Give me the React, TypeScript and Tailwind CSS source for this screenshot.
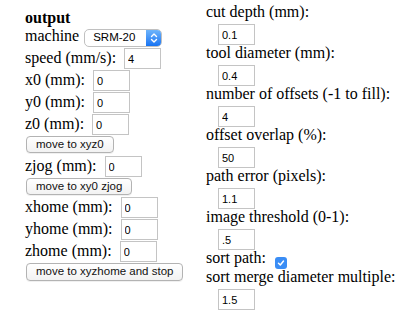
import React from 'react';

const inp =
  "w-[37px] h-[21px] box-border border border-[#c4c4c4] bg-white pl-[3px] text-[11px] text-black font-['Liberation_Sans',Arial,sans-serif] outline-none";

const btn =
  "ml-[1px] inline-flex items-center px-[9px] border border-[#b3b3b3] rounded-[4px] bg-linear-to-b from-white to-[#f2f2f2] text-[11.5px] leading-none text-[#111] font-['Liberation_Sans',Arial,sans-serif] shadow-[0_1px_0_rgba(0,0,0,0.06)]";

function Row({ label, value }: { label: string; value: string }) {
  return (
    <div className="flex items-baseline mb-[1px]">
      <span className="leading-[16px]">{label}</span>
      <input className={inp + ' ml-[8px]'} defaultValue={value} readOnly />
    </div>
  );
}

function Field({ label, value }: { label: string; value: string }) {
  return (
    <div>
      <div className="leading-[16px] mb-[4px]">{label}</div>
      <input className={inp + ' ml-[12px] block'} defaultValue={value} readOnly />
    </div>
  );
}

export default function App() {
  return (
    <div className="w-[415px] h-[321px] overflow-hidden bg-white flex pl-[25px] text-[16px] text-black font-['Liberation_Serif','Times_New_Roman',serif]">
      {/* left: machine output */}
      <div className="w-[181px] pt-[10px]">
        <div className="font-bold leading-[16px] mb-[3px]">output</div>
        <div className="flex items-start h-[19px]">
          <span className="leading-[16px] -mt-[1px]">machine</span>
          <div className="ml-[5px] h-[18px] w-[78px] flex border border-[#c0c0c0] rounded-[5px] bg-white overflow-hidden">
            <span className="flex-1 flex items-center pl-[8px] text-[11.5px] font-['Liberation_Sans',Arial,sans-serif]">
              SRM-20
            </span>
            <span className="w-[15px] h-full flex items-center justify-center bg-linear-to-b from-[#6db4fb] to-[#1473f2]">
              <svg width="8" height="12" viewBox="0 0 8 12" fill="none" stroke="white" strokeWidth="1.4" strokeLinecap="round" strokeLinejoin="round">
                <polyline points="1.5,4.5 4,2 6.5,4.5" />
                <polyline points="1.5,7.5 4,10 6.5,7.5" />
              </svg>
            </span>
          </div>
        </div>
        <Row label="speed (mm/s):" value="4" />
        <Row label="x0 (mm):" value="0" />
        <Row label="y0 (mm):" value="0" />
        <Row label="z0 (mm):" value="0" />
        <div className="mt-[1px] mb-[3px] h-[17px] flex">
          <span className={btn}>move to xyz0</span>
        </div>
        <Row label="zjog (mm):" value="0" />
        <div className="mb-[2px] h-[17px] flex">
          <span className={btn}>move to xy0 zjog</span>
        </div>
        <Row label="xhome (mm):" value="0" />
        <Row label="yhome (mm):" value="0" />
        <Row label="zhome (mm):" value="0" />
        <div className="h-[18px] flex">
          <span className={btn}>move to xyzhome and stop</span>
        </div>
      </div>

      {/* right: path settings */}
      <div className="flex-1 pt-[4px]">
        <Field label="cut depth (mm):" value="0.1" />
        <Field label="tool diameter (mm):" value="0.4" />
        <Field label="number of offsets (-1 to fill):" value="4" />
        <Field label="offset overlap (%):" value="50" />
        <Field label="path error (pixels):" value="1.1" />
        <Field label="image threshold (0-1):" value=".5" />
        <div className="flex items-start h-[19px]">
          <span className="leading-[16px]">sort path:</span>
          <span className="ml-[9px] mt-[7px] w-[12px] h-[12px] rounded-[3px] bg-[#3a8df5] flex items-center justify-center">
            <svg width="8" height="8" viewBox="0 0 8 8" fill="none" stroke="white" strokeWidth="1.5" strokeLinecap="round" strokeLinejoin="round">
              <polyline points="1.5,4.3 3.3,6 6.5,2" />
            </svg>
          </span>
        </div>
        <Field label="sort merge diameter multiple:" value="1.5" />
      </div>
    </div>
  );
}
